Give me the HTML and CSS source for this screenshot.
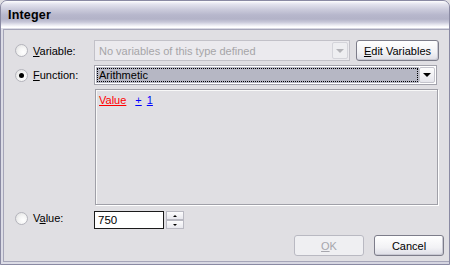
FILE: index.html
```html
<!DOCTYPE html>
<html>
<head>
<meta charset="utf-8">
<link rel="stylesheet" href="styles.css">
</head>
<body>
<div class="window">
  <div class="titlebar"><span class="title">Integer</span></div>
  <div class="frame">
    <div class="client">
      <div class="form">
        <label class="opt"><span class="radio"></span><span><u>V</u>ariable:</span></label>
        <div class="row1">
          <div class="combo disabled">
            <span class="combo-text">No variables of this type defined</span>
            <span class="drop"><span class="arrow"></span></span>
          </div>
          <button class="btn edit"><u>E</u>dit Variables</button>
        </div>

        <label class="opt"><span class="radio checked"></span><span><u>F</u>unction:</span></label>
        <div class="combo func">
          <span class="combo-text sel"><span class="focus">Arithmetic</span></span>
          <span class="drop"><span class="arrow"></span></span>
        </div>

        <div></div>
        <div class="expr">
          <span class="tok red">Value</span><span class="tok blue plus">+</span><span class="tok blue one">1</span>
        </div>

        <label class="opt"><span class="radio"></span><span>V<u>a</u>lue:</span></label>
        <div class="valrow">
          <div class="textbox">750</div>
          <div class="spin">
            <span class="spinbtn"><span class="up"></span></span>
            <span class="spinbtn"><span class="down"></span></span>
          </div>
        </div>
      </div>
      <div class="buttons">
        <button class="btn off"><u>O</u>K</button>
        <button class="btn">Cancel</button>
      </div>
    </div>
  </div>
</div>
</body>
</html>
```

FILE: styles.css
```css
* { box-sizing: border-box; }
html, body { margin: 0; padding: 0; background: #e0dfe3; }
body {
  width: 450px; height: 265px; overflow: hidden;
  font-family: "Liberation Sans", Arial, sans-serif;
  font-size: 11px; color: #000;
}
.window {
  width: 450px; height: 265px;
  display: flex; flex-direction: column;
  background: #c9c9d8;
  border: 1px solid #8a8aa3;
  border-radius: 7px 7px 0 0;
  overflow: hidden;
}
.titlebar {
  height: 27px; flex: none;
  display: flex; align-items: center;
  padding-left: 7px; padding-top: 1px;
  background: linear-gradient(to bottom, #ffffff 0px, #e4e4ee 3px, #cdcddd 8px, #b7b7cc 14px, #b3b3c8 18px, #c7c7d8 21px, #eaeaf2 24px, #ffffff 26px);
}
.title { font-weight: bold; font-size: 12.5px; letter-spacing: 0.2px; }
.frame {
  flex: 1;
  padding: 1px 2px 2px 2px;
  background: linear-gradient(to right, #dcdce6, #d4d4e0);
  display: flex;
}
.client {
  flex: 1;
  background: #e0dfe3;
  border: 1px solid #a5a5b8;
  padding: 10px 12px 0 11px;
  display: flex; flex-direction: column;
}
.form {
  display: grid;
  grid-template-columns: 79px 1fr;
  grid-template-rows: 21px 20px 116px 18px;
  row-gap: 4px;
}
.opt { display: flex; align-items: center; gap: 5px; }
.radio {
  width: 13px; height: 13px; border-radius: 50%;
  border: 1px solid #b4b4bc;
  background: radial-gradient(circle at 65% 65%, #ffffff 0%, #f4f4f4 45%, #dcdcdc 100%);
  position: relative;
  flex: none;
}
.radio.checked::after {
  content: ""; position: absolute; left: 3px; top: 3px;
  width: 5px; height: 5px; border-radius: 50%; background: #000;
}
.row1 { display: flex; gap: 6px; }
.combo {
  display: flex; align-items: stretch;
  border: 1px solid #a3a3ac;
  background: #fff;
  padding: 1px;
}
.combo.disabled { width: 256px; background: #ebeaee; border-color: #c2c1c8; }
.combo.func { margin-right: 2px; }
.combo-text { flex: 1; display: flex; align-items: center; padding-left: 3px; white-space: nowrap; overflow: hidden; }
.disabled .combo-text { color: #a6a5a8; }
.combo-text.sel { padding: 1px; background: #b6b7c4; }
.focus {
  flex: 1; height: 100%;
  display: flex; align-items: center;
  padding-left: 1px;
  border: 1px dotted #000;
}
.drop {
  width: 16px; flex: none;
  display: flex; align-items: center; justify-content: center;
  border: 1px solid #c4c4cc;
  border-radius: 2px;
  background: linear-gradient(to bottom, #fdfdfd, #e6e6ec);
}
.arrow {
  width: 0; height: 0;
  border-left: 4px solid transparent; border-right: 4px solid transparent;
  border-top: 4px solid #000;
}
.disabled .drop { border-color: #d4d4da; background: #eeeef1; }
.disabled .arrow { border-top-color: #b3b3b8; }
.btn {
  font-family: inherit; font-size: 11px; color: #000;
  height: 21px; padding: 0 6px;
  border: 1px solid #7d7d8a;
  border-radius: 3px;
  background: linear-gradient(to bottom, #ffffff, #f2f2f5 60%, #dedee6);
  box-shadow: inset -1px -1px 0 #c9c9d3;
}
.edit { width: 83px; }
.btn.off { color: #a6a6ad; border-color: #b9b9c2; box-shadow: none; background: #efeff2; }
.expr {
  border: 1px solid #a0a0a8;
  box-shadow: inset 1px 1px 0 #f8f8f8, 1px 1px 0 #ffffff;
  padding: 3px 3px;
  display: flex; align-items: flex-start;
  margin-left: 1px; margin-right: 1px;
  font-size: 11px;
}
.tok { text-decoration: underline; line-height: 14px; }
.tok.red { color: #ff0000; }
.tok.blue { color: #0000ff; }
.plus { margin-left: 9px; }
.one { margin-left: 5px; }
.valrow { display: flex; gap: 2px; margin-top: 2px; height: 18px; }
.textbox {
  width: 70px; height: 18px;
  border: 1px solid #1b1b1b;
  background: #fff;
  padding-left: 3px;
  display: flex; align-items: center;
  font-size: 11.5px;
}
.spin { display: flex; flex-direction: column; width: 18px; height: 18px; }
.spinbtn {
  flex: 1;
  display: flex; align-items: center; justify-content: center;
  border: 1px solid #b9b9c2;
  background: linear-gradient(to bottom, #fcfcfd, #e8e8ee);
}
.up { width: 0; height: 0; border-left: 2px solid transparent; border-right: 2px solid transparent; border-bottom: 2px solid #000; }
.down { width: 0; height: 0; border-left: 2px solid transparent; border-right: 2px solid transparent; border-top: 2px solid #000; }
.buttons {
  display: flex; justify-content: flex-end; gap: 10px;
  margin-top: 8px; margin-right: -5px;
}
.buttons .btn { width: 70px; }
```
